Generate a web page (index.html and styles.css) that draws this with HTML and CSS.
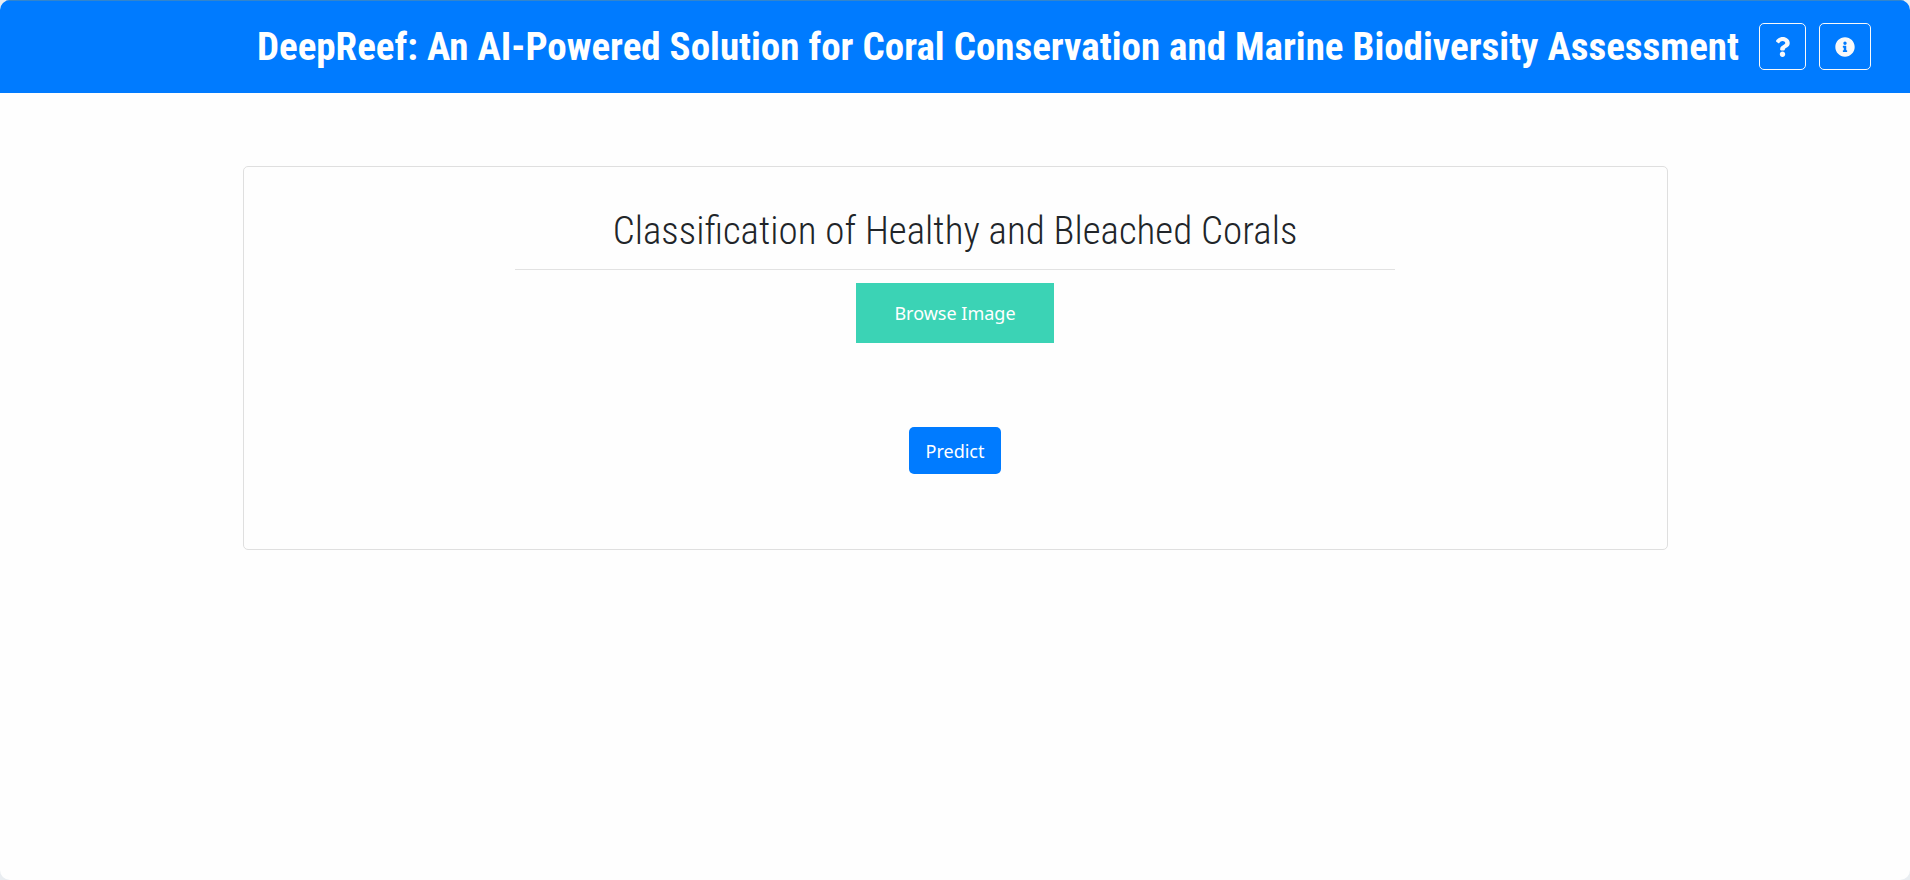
FILE: index.html
```html
<!DOCTYPE html>
<html lang="en">
<head>
  <meta charset="utf-8">
  <meta name="viewport" content="width=device-width, initial-scale=1">
  <title>DeepReef</title>
  <link rel="stylesheet" href="styles.css">
</head>
<body>
  <div class="window">
    <header class="navbar">
      <h1 class="brand">DeepReef: An AI-Powered Solution for Coral Conservation and Marine Biodiversity Assessment</h1>
      <nav class="actions">
        <button class="icon-button" type="button" aria-label="Help">
          <svg class="icon-help" viewBox="0 0 384 512" aria-hidden="true"><path d="M202.021 0C122.202 0 70.503 32.703 29.914 91.026c-7.363 10.58-5.093 25.086 5.178 32.874l43.138 32.709c10.373 7.865 25.132 6.026 33.253-4.148 25.049-31.381 43.63-49.449 82.757-49.449 30.764 0 68.816 19.799 68.816 49.631 0 22.552-18.617 34.134-48.993 51.164-35.423 19.86-82.299 44.576-82.299 106.405V320c0 13.255 10.745 24 24 24h72.471c13.255 0 24-10.745 24-24v-5.773c0-42.86 125.268-44.645 125.268-160.627C377.504 66.256 286.902 0 202.021 0zM192 373.459c-38.196 0-69.271 31.075-69.271 69.271 0 38.195 31.075 69.27 69.271 69.27s69.271-31.075 69.271-69.271-31.075-69.27-69.271-69.27z"/></svg>
        </button>
        <button class="icon-button" type="button" aria-label="About">
          <svg class="icon-info" viewBox="0 0 512 512" aria-hidden="true"><path d="M256 8C119.043 8 8 119.083 8 256c0 136.997 111.043 248 248 248s248-111.003 248-248C504 119.083 392.957 8 256 8zm0 110c23.196 0 42 18.804 42 42s-18.804 42-42 42-42-18.804-42-42 18.804-42 42-42zm56 254c0 6.627-5.373 12-12 12h-88c-6.627 0-12-5.373-12-12v-24c0-6.627 5.373-12 12-12h12v-64h-12c-6.627 0-12-5.373-12-12v-24c0-6.627 5.373-12 12-12h64c6.627 0 12 5.373 12 12v100h12c6.627 0 12 5.373 12 12v24z"/></svg>
        </button>
      </nav>
    </header>
    <main class="container">
      <section class="card">
        <h2 class="card-title">Classification of Healthy and Bleached Corals</h2>
        <hr class="divider">
        <button class="browse" type="button">Browse Image</button>
        <button class="predict" type="button">Predict</button>
      </section>
    </main>
  </div>
</body>
</html>
```

FILE: styles.css
```css
* {
  box-sizing: border-box;
}

body {
  margin: 0;
  background: #e9edf1;
  color: #212529;
  font-family: "Noto Sans", sans-serif;
}

.window {
  min-height: 100vh;
  background: #fefefe;
  border-radius: 10px;
  overflow: hidden;
}

.navbar {
  display: flex;
  align-items: center;
  justify-content: flex-end;
  gap: 20px;
  padding: 22px 39px 23px;
  background: #007bff;
  border-top: 1px solid #3385cc;
  color: #fff;
}

.brand {
  margin: 0;
  font: bold 39px/46px "Roboto Condensed", "Liberation Sans Narrow", sans-serif;
  white-space: nowrap;
}

.actions {
  display: flex;
  gap: 13px;
}

.icon-button {
  display: flex;
  align-items: center;
  height: 47px;
  padding: 0 15px;
  border: 1px solid #f8f9fa;
  border-radius: 5px;
  background: transparent;
  color: #f8f9fa;
}

.icon-button svg {
  height: 20px;
  fill: currentColor;
}

.icon-help {
  width: 15px;
}

.icon-info {
  width: 20px;
}

.container {
  max-width: 1425px;
  margin: 73px auto 0;
}

.card {
  display: flex;
  flex-direction: column;
  align-items: center;
  padding: 40px 20px 75px;
  border: 1px solid #dfdfdf;
  border-radius: 5px;
}

.card-title {
  margin: 0;
  font: 300 39px/48px "Roboto Condensed", "Liberation Sans Narrow", sans-serif;
}

.divider {
  width: 100%;
  max-width: 880px;
  margin: 14px 0 13px;
  border: 0;
  border-top: 1px solid #e2e2e2;
}

.browse,
.predict {
  border: 0;
  color: #fff;
  font: 18px/24px "Noto Sans", sans-serif;
}

.browse {
  padding: 18px 38px;
  background: #3bd3b5;
}

.predict {
  height: 47px;
  margin-top: 84px;
  padding: 0 17px;
  border-radius: 5px;
  background: #007bff;
}
```
